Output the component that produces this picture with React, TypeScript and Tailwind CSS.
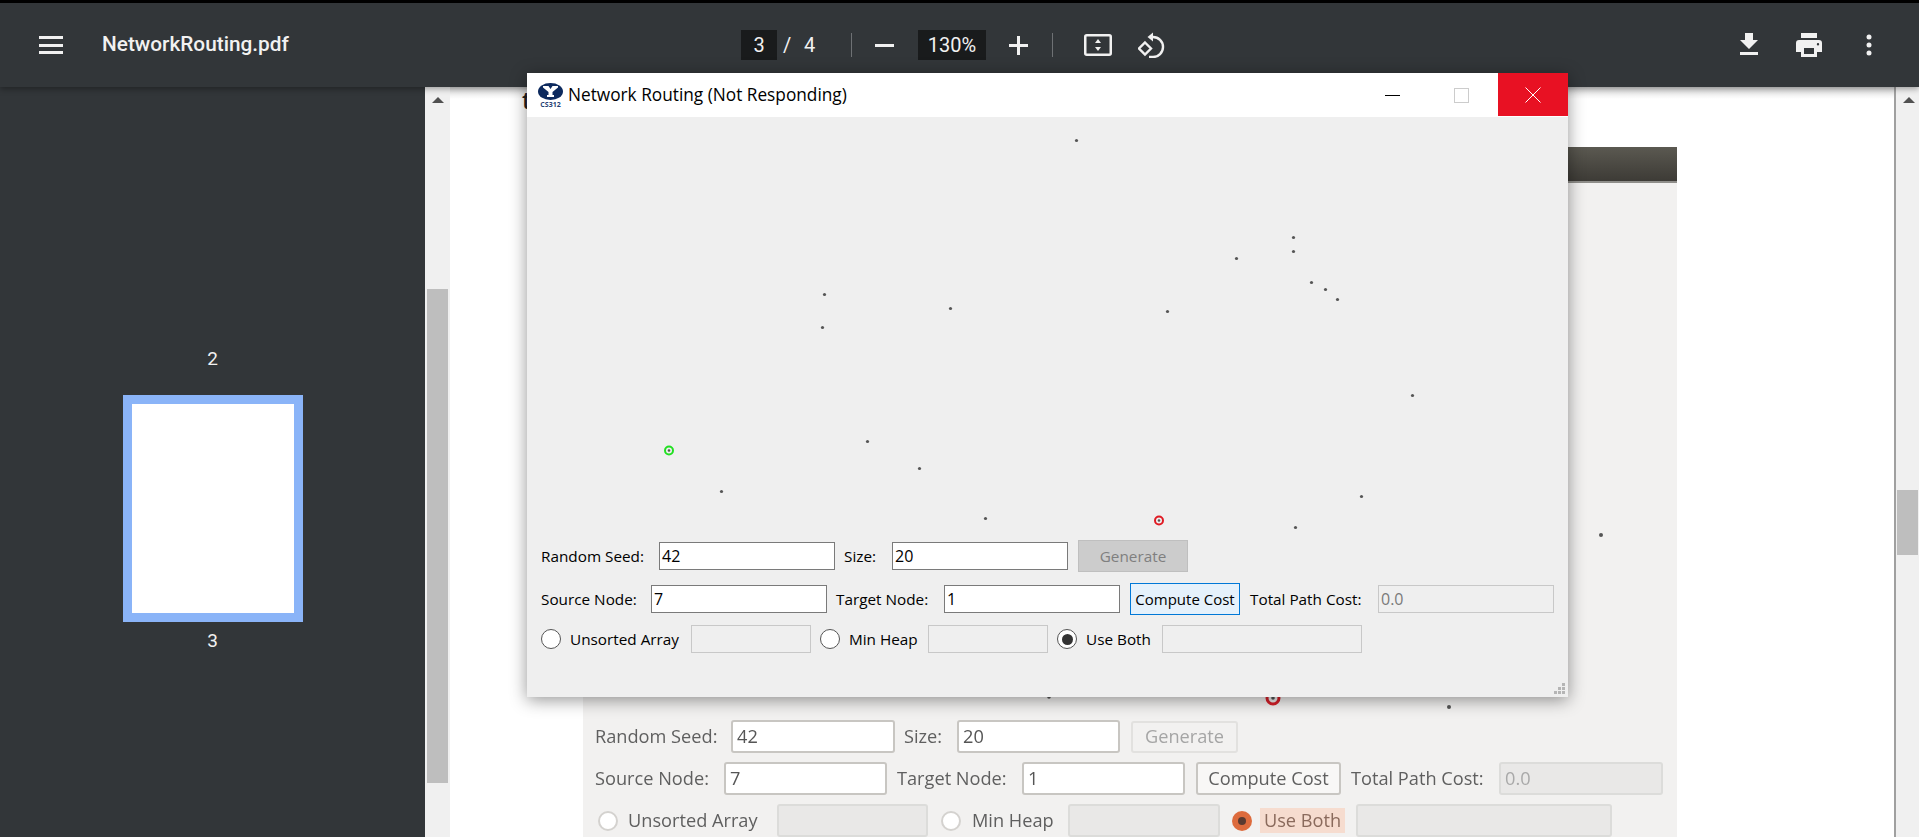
import React from "react";

const sans = "font-['Open_Sans','Noto_Sans',sans-serif]";

const graphDots = [
  [549, 23], [766, 120], [766, 134], [709, 141], [784, 165], [798, 172], [810, 182],
  [297, 177], [295, 210], [423, 191], [640, 194], [885, 278], [340, 324], [392, 351],
  [194, 374], [834, 379], [458, 401], [768, 410],
];

function Field({ w, value, muted }: { w: string; value?: string; muted?: boolean }) {
  return (
    <div
      className={`${w} h-[28px] border flex items-center px-[2px] text-[16px] ${
        muted ? "border-[#c8c8c8] text-[#7a7a7a]" : "border-[#7a7a7a] bg-white text-black"
      }`}
    >
      {value}
    </div>
  );
}

function Radio({ checked }: { checked?: boolean }) {
  return (
    <span className="w-[20px] h-[20px] rounded-full border border-[#555555] bg-white flex items-center justify-center shrink-0">
      {checked && <span className="w-[11px] h-[11px] rounded-full bg-[#333333]" />}
    </span>
  );
}

function OldField({ w, value, muted }: { w: string; value?: string; muted?: boolean }) {
  return (
    <div
      className={`${w} h-[33px] rounded-[3px] border-2 flex items-center px-[4px] ${
        muted ? "border-[#dcdcda] bg-[#e9e8e7] text-[#a9a9a9]" : "border-[#c8c6c2] bg-white text-[#555555]"
      }`}
    >
      {value}
    </div>
  );
}

function OldRadio({ checked }: { checked?: boolean }) {
  return (
    <span
      className={`w-[20px] h-[20px] rounded-full flex items-center justify-center shrink-0 ${
        checked ? "bg-[#dd6b3d]" : "bg-white border-2 border-[#d4d2cf]"
      }`}
    >
      {checked && <span className="w-[8px] h-[8px] rounded-full bg-[#5a3a30]" />}
    </span>
  );
}

function ToolbarIcons() {
  return (
    <>
      <svg className="absolute left-[1740px] top-[30px]" width="18" height="22" viewBox="0 0 18 22" fill="#f1f1f1">
        <path d="M5 0h8v7h5l-9 9-9-9h5z" />
        <rect y="19" width="18" height="3" />
      </svg>
      <svg className="absolute left-[1796px] top-[30px]" width="26" height="24" viewBox="0 0 26 24" fill="#f1f1f1">
        <path fillRule="evenodd" d="M5 0h16v5H5zM3 7h20a3 3 0 0 1 3 3v9h-5v5H5v-5H0v-9a3 3 0 0 1 3-3zm5 8v6h10v-6zm14-5a1.2 1.2 0 1 0 0 2.4a1.2 1.2 0 0 0 0-2.4z" />
      </svg>
      <svg className="absolute left-[1866px] top-[31px]" width="6" height="22" viewBox="0 0 6 22" fill="#f1f1f1">
        <circle cx="3" cy="3" r="2.5" />
        <circle cx="3" cy="11" r="2.5" />
        <circle cx="3" cy="19" r="2.5" />
      </svg>
    </>
  );
}

export default function App() {
  return (
    <div className={`relative w-full h-[837px] overflow-hidden bg-[#323639] ${sans}`}>
      <div className="h-[3px] bg-black" />

      {/* toolbar */}
      <header className="relative z-10 h-[84px] bg-[#323639] shadow-[0_2px_6px_rgba(0,0,0,0.35)] text-[#f1f1f1] flex items-center font-['Roboto',sans-serif]">
        <div className="ml-[39px] w-[24px] h-[18px] flex flex-col justify-between">
          <span className="h-[3px] bg-[#f1f1f1]" />
          <span className="h-[3px] bg-[#f1f1f1]" />
          <span className="h-[3px] bg-[#f1f1f1]" />
        </div>
        <span className="ml-[39px] w-[452px] text-[20.8px] font-medium">NetworkRouting.pdf</span>
        <div className="w-[36px] h-[30px] ml-[187px] bg-[#191b1c] flex items-center justify-center text-[20px]">3</div>
        <span className="ml-[6px] w-[8px] text-[20px]">/</span>
        <span className="ml-[13px] w-[12px] text-[20px]">4</span>
        <span className="ml-[35px] w-px h-[24px] bg-[#6e7174]" />
        <span className="ml-[23px] w-[19px] h-[3px] bg-[#f1f1f1]" />
        <div className="ml-[24px] w-[68px] h-[30px] bg-[#191b1c] flex items-center justify-center text-[20px]">130%</div>
        <svg className="ml-[23px]" width="19" height="19" viewBox="0 0 19 19" fill="#f1f1f1">
          <path d="M8 0h3v8h8v3h-8v8H8v-8H0V8h8z" />
        </svg>
        <span className="ml-[24px] w-px h-[24px] bg-[#6e7174]" />
        <svg className="ml-[31px]" width="28" height="22" viewBox="0 0 28 22" fill="none">
          <rect x="1.25" y="1.25" width="25.5" height="19.5" rx="1.5" stroke="#f1f1f1" strokeWidth="2.5" />
          <path d="M14 5l3 4h-6zM14 17l-3-4h6z" fill="#f1f1f1" />
        </svg>
        <svg className="ml-[26px]" width="27" height="26" viewBox="0 0 27 26" fill="none" stroke="#f1f1f1" strokeWidth="2.4">
          <path d="M7 10.5l6 6-6 6-6-6z" />
          <path d="M13 5h2a10 10 0 0 1 0 20h-4" />
          <path d="M15 0.5L9.5 5l5.5 4.5z" fill="#f1f1f1" stroke="none" />
        </svg>
        <ToolbarIcons />
      </header>

      {/* viewer body */}
      <div className="flex h-[750px]">
        <aside className="w-[425px] bg-[#323639] flex flex-col items-center text-[#f1f1f1] text-[19px] font-['Roboto',sans-serif]">
          <span className="mt-[258px]">2</span>
          <div className="mt-[21px] w-[180px] h-[227px] border-[9px] border-[#8ab4f8] bg-white" />
          <span className="mt-[5px]">3</span>
        </aside>

        <div className="w-[25px] bg-[#f0f0f0] relative">
          <svg className="mt-[10px] ml-[7px]" width="12" height="6" viewBox="0 0 12 6" fill="#505050">
            <path d="M6 0l6 6H0z" />
          </svg>
          <div className="absolute left-[2px] top-[202px] w-[21px] h-[494px] bg-[#bebebe]" />
        </div>

        <main className="relative w-[1444px] bg-white overflow-hidden">
          <div className="absolute inset-x-0 top-0 h-[12px] bg-gradient-to-b from-black/15 to-transparent z-[1]" />
          <span className="absolute left-[72px] top-[-1px] text-[24px] leading-[28px] font-semibold text-[#222222]">t</span>
          <section className="ml-[133px] mt-[60px] w-[1094px] h-[690px] flex flex-col bg-[#f2f1f0]">
            <div className="h-[36px] bg-gradient-to-b from-[#5b5951] to-[#3d3b36] border-b-2 border-[#8f8e8a]" />
            <div className="relative flex-1 text-[18.2px] text-[#5f5f5f] font-medium blur-[0.6px]">
              <svg className="absolute inset-0" width="1094" height="654" fill="#555555">
                <circle cx="1018" cy="352" r="2" />
                <circle cx="466" cy="514" r="1.8" />
                <circle cx="866" cy="524" r="2" />
                <circle cx="690" cy="515" r="6" fill="none" stroke="#d8202a" strokeWidth="3" />
                <circle cx="690" cy="515" r="1.8" />
              </svg>
              <div className="absolute left-[12px] top-[537px] flex flex-col">
                <div className="flex items-center h-[33px]">
                  <span className="w-[136px]">Random Seed:</span>
                  <OldField w="w-[164px]" value="42" />
                  <span className="ml-[9px] w-[53px]">Size:</span>
                  <OldField w="w-[163px]" value="20" />
                  <div className="ml-[11px] w-[107px] h-[32px] rounded-[3px] border-2 border-[#e2e1df] flex items-center justify-center text-[#a5a5a5]">Generate</div>
                </div>
                <div className="flex items-center h-[33px] mt-[9px]">
                  <span className="w-[129px]">Source Node:</span>
                  <OldField w="w-[163px]" value="7" />
                  <span className="ml-[10px] w-[125px]">Target Node:</span>
                  <OldField w="w-[163px]" value="1" />
                  <div className="ml-[11px] w-[145px] h-[33px] rounded-[3px] border-2 border-[#c8c6c2] bg-[#f8f7f6] flex items-center justify-center">Compute Cost</div>
                  <span className="ml-[10px] w-[148px]">Total Path Cost:</span>
                  <OldField w="w-[164px]" value="0.0" muted />
                </div>
                <div className="flex items-center h-[33px] mt-[9px] ml-[3px]">
                  <OldRadio />
                  <span className="ml-[10px] w-[149px]">Unsorted Array</span>
                  <OldField w="w-[151px]" muted />
                  <span className="ml-[13px]"><OldRadio /></span>
                  <span className="ml-[11px] w-[96px]">Min Heap</span>
                  <OldField w="w-[152px]" muted />
                  <span className="ml-[12px]"><OldRadio checked /></span>
                  <span className="ml-[8px] w-[85px] h-[25px] bg-[#f6dccf] flex items-center justify-center text-[#8a6a5c]">Use Both</span>
                  <span className="ml-[11px]"><OldField w="w-[256px]" muted /></span>
                </div>
              </div>
            </div>
          </section>
        </main>

        <div className="w-[25px] bg-[#f0f0f0] border-l-2 border-[#a0a0a0] relative">
          <svg className="absolute left-[7px] top-[10px]" width="12" height="6" viewBox="0 0 12 6" fill="#505050">
            <path d="M6 0l6 6H0z" />
          </svg>
          <div className="absolute left-[1px] top-[403px] w-[21px] h-[65px] bg-[#bebebe]" />
        </div>
      </div>

      {/* not responding window */}
      <div className="absolute z-20 left-[527px] top-[73px] w-[1041px] h-[624px] flex flex-col bg-[#efefef] shadow-[0_3px_16px_rgba(0,0,0,0.42)] text-[15.3px] text-black">
        <div className="h-[44px] bg-white flex items-center shrink-0">
          <svg className="ml-[11px] mt-[2px]" width="25" height="26" viewBox="0 0 25 26">
            <ellipse cx="12.5" cy="8.5" rx="12.5" ry="8.5" fill="#0d2a5e" />
            <path d="M5 3h5.5l2 3 2-3H20v1.5l-5.500 4.500v3H16v2H9v-2h1.500V9L5 4.500z" fill="#ffffff" />
            <text x="12.5" y="23.5" textAnchor="middle" fontSize="7" fontWeight="700" fill="#1f3f74">CS312</text>
          </svg>
          <span className="ml-[5px] text-[17.25px]">Network Routing (Not Responding)</span>
          <div className="ml-auto flex items-center">
            <span className="w-[15px] h-px bg-black" />
            <span className="ml-[54px] w-[15px] h-[15px] border border-[#cccccc]" />
            <div className="ml-[29px] w-[70px] h-[43px] mb-px bg-[#e81123] flex items-center justify-center">
              <svg width="16" height="16" viewBox="0 0 16 16" stroke="#ffffff" strokeWidth="1">
                <path d="M0.5 0.5l15 15M15.5 0.5l-15 15" />
              </svg>
            </div>
          </div>
        </div>

        <svg className="shrink-0" width="1041" height="420" fill="#555555">
          <g transform="translate(0.5 0.5)">
            {graphDots.map(([cx, cy]) => (
              <circle key={`${cx}-${cy}`} cx={cx} cy={cy} r="1.6" />
            ))}
          </g>
          <circle cx="142" cy="333.5" r="4" fill="none" stroke="#22e022" strokeWidth="2" />
          <circle cx="142" cy="333.5" r="1.3" />
          <circle cx="632" cy="403.5" r="4" fill="none" stroke="#e01b24" strokeWidth="2" />
          <circle cx="632" cy="403.5" r="1.3" />
        </svg>

        <div className="flex items-center h-[32px] ml-[14px] mt-[3px]">
          <span className="w-[118px]">Random Seed:</span>
          <Field w="w-[176px]" value="42" />
          <span className="ml-[9px] w-[48px]">Size:</span>
          <Field w="w-[176px]" value="20" />
          <div className="ml-[10px] w-[110px] h-[32px] bg-[#cccccc] border border-[#bfbfbf] flex items-center justify-center text-[#7f7f7f]">Generate</div>
        </div>
        <div className="flex items-center h-[32px] ml-[14px] mt-[11px]">
          <span className="w-[110px]">Source Node:</span>
          <Field w="w-[176px]" value="7" />
          <span className="ml-[9px] w-[108px]">Target Node:</span>
          <Field w="w-[176px]" value="1" />
          <div className="ml-[10px] w-[110px] h-[32px] bg-[#e5f1fb] border border-[#0078d7] flex items-center justify-center text-[15px]">Compute Cost</div>
          <span className="ml-[10px] w-[128px]">Total Path Cost:</span>
          <Field w="w-[176px]" value="0.0" muted />
        </div>
        <div className="flex items-center h-[28px] ml-[14px] mt-[10px]">
          <Radio />
          <span className="ml-[9px] w-[121px]">Unsorted Array</span>
          <Field w="w-[120px]" muted />
          <span className="ml-[9px]"><Radio /></span>
          <span className="ml-[9px] w-[79px]">Min Heap</span>
          <Field w="w-[120px]" muted />
          <span className="ml-[9px]"><Radio checked /></span>
          <span className="ml-[9px] w-[76px]">Use Both</span>
          <Field w="w-[200px]" muted />
        </div>

        <svg className="absolute right-[3px] bottom-[3px]" width="11" height="11" viewBox="0 0 11 11" fill="#b5b5b5">
          <rect x="8" y="0" width="3" height="3" />
          <rect x="4" y="4" width="3" height="3" />
          <rect x="8" y="4" width="3" height="3" />
          <rect x="0" y="8" width="3" height="3" />
          <rect x="4" y="8" width="3" height="3" />
          <rect x="8" y="8" width="3" height="3" />
        </svg>
      </div>
    </div>
  );
}
